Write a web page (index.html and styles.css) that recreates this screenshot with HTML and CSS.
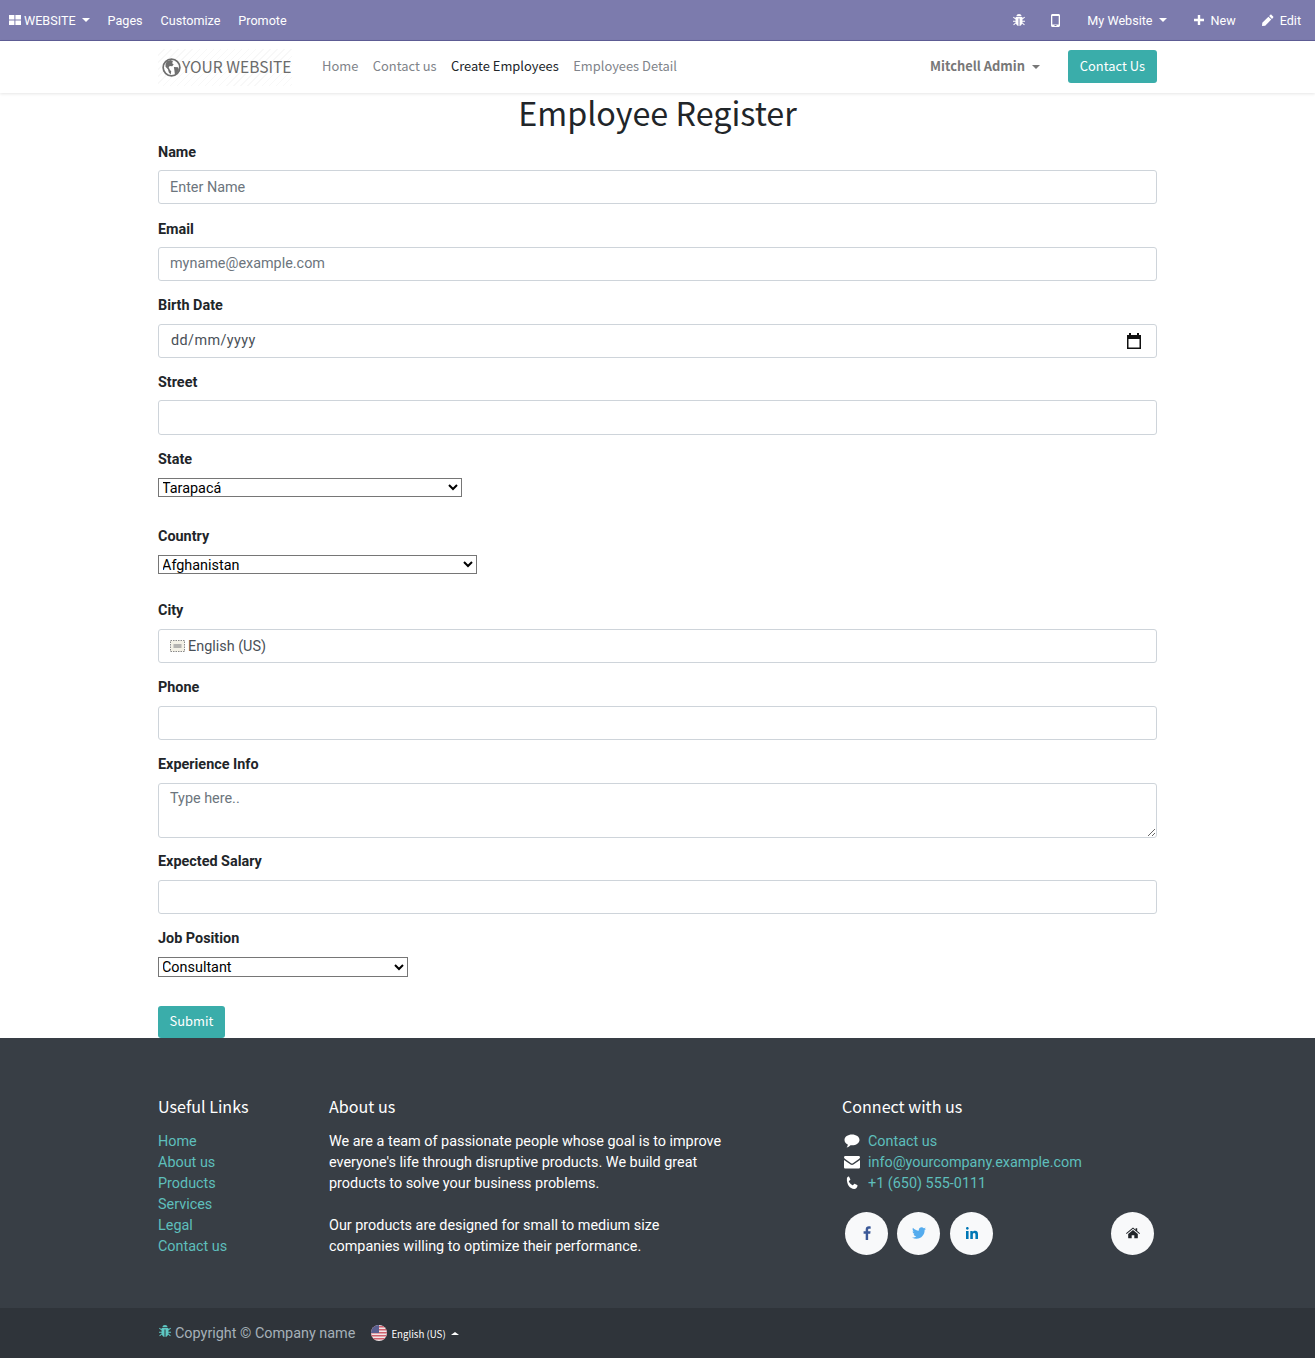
FILE: index.html
```html
<!DOCTYPE html>
<html lang="en">
<head>
  <meta charset="UTF-8">
  <title>Employee Register</title>
  <link rel="stylesheet" href="styles.css">
</head>
<body>

<div class="topbar">
  <div class="topbar-left">
    <a class="top-brand">
      <svg class="ico-apps" viewBox="0 0 12 10"><path d="M0 0h5.400v4.400H0zM6.400 0H12v4.400H6.400zM0 5.400h5.400V10H0zM6.400 5.400H12V10H6.400z"/></svg>
      WEBSITE <span class="caret"></span>
    </a>
    <a>Pages</a>
    <a>Customize</a>
    <a>Promote</a>
  </div>
  <div class="topbar-right">
    <a class="top-bug">
      <svg class="ico-bug" viewBox="0 0 14 14"><path d="M4.400 3.200C4.600 1.800 5.600 1 7 1s2.400.8 2.600 2.200zM3.600 4h6.800v1.200l2-1.400.6.800-2.600 1.900v1.200H13v1h-2.600v.8l2.400 2-.7.800-2-1.700C9.600 11.900 8.600 13 7.500 13V5.500h-1V13c-1.100 0-2.100-1.100-2.600-2.400l-2 1.700-.7-.8 2.400-2v-.8H1v-1h2.600V6.500L1 4.600l.6-.8 2 1.400z"/></svg>
    </a>
    <a class="top-phone">
      <svg class="ico-phone" viewBox="0 0 9 13"><path fill-rule="evenodd" d="M1.500 0h6C8.300 0 9 .7 9 1.500v10c0 .8-.7 1.500-1.500 1.500h-6C.7 13 0 12.300 0 11.500v-10C0 .7.7 0 1.500 0zM1.300 2v8.600h6.400V2zM3.500 11v1h2v-1z"/></svg>
    </a>
    <a class="top-site">My Website <span class="caret"></span></a>
    <a class="top-new">
      <svg class="ico-plus" viewBox="0 0 10 10"><path d="M3.800 0h2.400v3.800H10v2.400H6.200V10H3.800V6.200H0V3.800h3.800z"/></svg>
      New
    </a>
    <a class="top-edit">
      <svg class="ico-pencil" viewBox="0 0 12 12"><path d="M8.200.9c.4-.4 1-.4 1.400 0l1.500 1.500c.4.4.4 1 0 1.400L10 4.900 7.100 2zM6.400 2.700l2.900 2.900L3.200 11.700 0 12l.3-3.200z"/></svg>
      Edit
    </a>
  </div>
</div>

<header class="navbar">
  <div class="navbar-inner">
    <a class="logo">
      <svg class="logo-globe" viewBox="0 0 20 20">
        <circle cx="10" cy="10" r="8.800" fill="#fff" stroke="#6f6f6f" stroke-width="1.800"/>
        <path fill="#6f6f6f" d="M5 3.500l4-1.300 2.500 1 -.8 2.200 1.600 1.400-1.600 2-2.500-.5-1.200 1.500 1.500 3 1.200 1 -.5 3.500-2-2-1-3.500-2.500-2.500V6.500zM12.500 9.500l4.500.3.800 2.500-2 4-2.200 1.200-.5-4z"/>
      </svg>
      <span class="logo-text">YOUR WEBSITE</span>
    </a>
    <nav class="menu">
      <a>Home</a>
      <a>Contact us</a>
      <a class="active">Create Employees</a>
      <a>Employees Detail</a>
    </nav>
    <a class="user">Mitchell Admin <span class="caret"></span></a>
    <a class="btn btn-contact">Contact Us</a>
  </div>
</header>

<main class="page">
  <h1>Employee Register</h1>
  <form>
    <div class="field">
      <label>Name</label>
      <input class="control" type="text" placeholder="Enter Name">
    </div>
    <div class="field">
      <label>Email</label>
      <input class="control" type="text" placeholder="myname@example.com">
    </div>
    <div class="field">
      <label>Birth Date</label>
      <div class="date-wrap">
        <input class="control date-text" type="text" value="dd/mm/yyyy">
        <svg class="ico-calendar" viewBox="0 0 16 16"><path fill-rule="evenodd" d="M3 0h2v2h6V0h2v2h2v14H1V2h2zM2.500 6v8.500h11V6z"/></svg>
      </div>
    </div>
    <div class="field">
      <label>Street</label>
      <input class="control" type="text">
    </div>
    <div class="field field-select field-state">
      <label>State</label>
      <select class="select-state"><option>Tarapacá</option></select>
    </div>
    <div class="field field-select field-country">
      <label>Country</label>
      <select class="select-country"><option>Afghanistan</option></select>
    </div>
    <div class="field">
      <label>City</label>
      <div class="control city">
        <svg class="ico-broken" viewBox="0 0 15 14">
          <rect x=".5" y="1.500" width="14" height="11" fill="#f4f1e6" stroke="#8a8a8a" stroke-dasharray="1.500 1"/>
          <rect x="3.500" y="5" width="8" height="4" fill="#9a9a9a" opacity=".7"/>
        </svg>
        <span>English (US)</span>
      </div>
    </div>
    <div class="field">
      <label>Phone</label>
      <input class="control" type="text">
    </div>
    <div class="field field-area">
      <label>Experience Info</label>
      <textarea class="control area" placeholder="Type here.."></textarea>
    </div>
    <div class="field">
      <label>Expected Salary</label>
      <input class="control" type="text">
    </div>
    <div class="field field-select field-job">
      <label>Job Position</label>
      <select class="select-job"><option>Consultant</option></select>
    </div>
    <button class="btn btn-submit" type="button">Submit</button>
  </form>
</main>

<footer class="footer">
  <div class="footer-main">
    <div class="col-links">
      <h5>Useful Links</h5>
      <ul>
        <li><a>Home</a></li>
        <li><a>About us</a></li>
        <li><a>Products</a></li>
        <li><a>Services</a></li>
        <li><a>Legal</a></li>
        <li><a>Contact us</a></li>
      </ul>
    </div>
    <div class="col-about">
      <h5>About us</h5>
      <p>We are a team of passionate people whose goal is to improve everyone's life through disruptive products. We build great products to solve your business problems.</p>
      <p>Our products are designed for small to medium size companies willing to optimize their performance.</p>
    </div>
    <div class="col-connect">
      <h5>Connect with us</h5>
      <ul>
        <li>
          <svg class="ico-contact" viewBox="0 0 16 14"><path d="M8 .5c4.200 0 7.500 2.400 7.500 5.400S12.200 11.300 8 11.300c-.5 0-1 0-1.500-.1C5.500 12.300 4 13.200 2.500 13.500c.7-.8 1.200-1.700 1.300-3C1.900 9.500.5 7.800.5 5.900.5 2.900 3.800.5 8 .5z"/></svg>
          <a>Contact us</a>
        </li>
        <li>
          <svg class="ico-contact" viewBox="0 0 16 14"><path d="M1.300 1h13.400c.7 0 1.300.6 1.300 1.300 0 .6-.4 1.100-.8 1.400L8.900 8.300c-.5.400-1.300.4-1.800 0L.8 3.700C.4 3.400 0 2.900 0 2.300 0 1.600.6 1 1.300 1zM0 5l6.600 4.500c.8.600 2 .6 2.800 0L16 5v7.200c0 .7-.6 1.300-1.300 1.300H1.300C.6 13.500 0 12.900 0 12.200z"/></svg>
          <a>info@yourcompany.example.com</a>
        </li>
        <li>
          <svg class="ico-contact" viewBox="0 0 16 14"><path d="M4.600 .5c.3 0 .5.100.6.400l1.100 2.300c.1.300 0 .6-.2.800L5 4.900c-.2.200-.2.400-.1.600.8 1.600 2.100 2.900 3.600 3.700.2.100.4.100.6-.1l1.100-1.100c.2-.2.500-.3.800-.1l2.200 1.200c.2.100.4.400.3.700-.2 1.500-1.500 3.200-3.300 3.200C5.900 13 2.500 8.500 2.900 2.600 3 1.600 3.700.6 4.600.5z"/></svg>
          <a>+1 (650) 555-0111</a>
        </li>
      </ul>
      <div class="socials">
        <a class="social">
          <svg class="ico-fb" viewBox="0 0 9 16"><path d="M5.800 16V8.900h2.400l.4-2.800H5.800V4.400c0-.8.200-1.400 1.400-1.400h1.500V.5C8.400.4 7.600.3 6.600.3 4.500.3 3 1.600 3 4v2.100H.6v2.800H3V16z"/></svg>
        </a>
        <a class="social">
          <svg class="ico-tw" viewBox="0 0 16 13"><path d="M16 1.600c-.6.300-1.200.4-1.900.5.700-.4 1.200-1 1.400-1.800-.6.400-1.300.6-2.100.8C12.800.4 12 0 11 0 9.200 0 7.700 1.500 7.700 3.300c0 .3 0 .5.100.7C5.100 3.900 2.700 2.600 1.100.6.800 1.100.7 1.600.7 2.200c0 1.100.6 2.100 1.500 2.700-.5 0-1-.2-1.500-.4 0 1.600 1.100 2.900 2.600 3.200-.5.100-1 .2-1.500.1.400 1.300 1.600 2.200 3.100 2.300C3.700 11.100 1.900 11.700 0 11.500 1.500 12.500 3.200 13 5 13c6 0 9.400-5 9.400-9.400v-.4c.7-.4 1.200-1 1.600-1.600z"/></svg>
        </a>
        <a class="social social-in">
          <svg class="ico-in" viewBox="0 0 14 14"><path fill-rule="evenodd" d="M0 4.600h3V14H0zM1.500 0C2.500 0 3.200.7 3.200 1.600S2.500 3.200 1.500 3.200 0 2.500 0 1.600.6 0 1.500 0zM5 4.600h2.800v1.300c.5-.9 1.500-1.500 2.800-1.500C13.200 4.400 14 6 14 8.500V14h-3V9c0-1.200-.3-2.100-1.500-2.100S8 7.800 8 9v5H5z"/></svg>
        </a>
        <a class="social social-home">
          <svg class="ico-home" viewBox="0 0 16 13"><path d="M8 3l5.500 4.600V12c0 .4-.2.600-.6.600H9.500V9h-3v3.600H3.100c-.4 0-.6-.2-.6-.6V7.600zM8 .2l3 2.500V1h1.800v3.200L16 6.900l-.7.800L8 1.700.7 7.700 0 6.900z"/></svg>
        </a>
      </div>
    </div>
  </div>
  <div class="footer-bottom">
    <div class="bottom-inner">
      <svg class="ico-bug-teal" viewBox="0 0 14 14"><path d="M4.400 3.200C4.600 1.800 5.600 1 7 1s2.400.8 2.600 2.200zM3.600 4h6.800v1.200l2-1.400.6.800-2.600 1.900v1.200H13v1h-2.600v.8l2.400 2-.7.800-2-1.700C9.600 11.900 8.600 13 7.500 13V5.500h-1V13c-1.100 0-2.100-1.100-2.600-2.400l-2 1.700-.7-.8 2.400-2v-.8H1v-1h2.600V6.500L1 4.600l.6-.8 2 1.400z"/></svg>
      <span class="copy">Copyright © Company name</span>
      <svg class="flag" viewBox="0 0 16 16">
        <clipPath id="flag-clip"><circle cx="8" cy="8" r="8"/></clipPath>
        <g clip-path="url(#flag-clip)">
          <rect width="16" height="16" fill="#f2e6e8"/>
          <path fill="#d0606c" d="M0 1h16v1.500H0zM0 4h16v1.500H0zM0 7h16v1.500H0zM0 10h16v1.500H0zM0 13h16v1.500H0z"/>
          <rect width="8" height="8" fill="#5a5f8f"/>
        </g>
      </svg>
      <span class="lang">English (US)</span>
      <span class="caret caret-up"></span>
    </div>
  </div>
</footer>

</body>
</html>
```

FILE: styles.css
```css
* {
  box-sizing: border-box;
}
body {
  margin: 0;
  background: #fff;
  color: #212529;
  font-family: Roboto, sans-serif;
  font-size: 14.400px;
  line-height: 21px;
}
a {
  text-decoration: none;
}
svg {
  display: block;
  flex: none;
}

.caret {
  display: inline-block;
  width: 0;
  height: 0;
  margin-left: 4px;
  vertical-align: 2px;
  border-top: 4px solid currentColor;
  border-left: 4px solid transparent;
  border-right: 4px solid transparent;
}
.caret-up {
  margin-left: 0;
  margin-top: 1px;
  border-top: 0;
  border-bottom: 3px solid #fff;
  border-left: 4px solid transparent;
  border-right: 4px solid transparent;
}

/* top bar */
.topbar {
  display: flex;
  justify-content: space-between;
  height: 41px;
  background: #7c7bad;
  border-bottom: 1px solid #5f5e97;
  color: #fff;
  font-size: 12.600px;
}
.topbar a {
  display: flex;
  align-items: center;
  color: #fff;
}
.topbar-left,
.topbar-right {
  display: flex;
  height: 40px;
}
.topbar-left a {
  margin-left: 18px;
}
.topbar-left .top-brand {
  margin-left: 9px;
  gap: 3px;
}
.top-brand .caret {
  margin-left: 3px;
}
.ico-apps {
  width: 12px;
  height: 10px;
  fill: #fff;
}
.ico-bug {
  width: 14px;
  height: 14px;
  fill: #fff;
}
.ico-phone {
  width: 9px;
  height: 13px;
  fill: #fff;
}
.top-bug {
  margin-right: 25px;
}
.top-phone {
  margin-right: 27px;
}
.top-site {
  margin-right: 27px;
}
.top-site .caret {
  margin-left: 6px;
}
.top-new {
  gap: 7px;
  margin-right: 26px;
}
.ico-plus {
  width: 10px;
  height: 10px;
  fill: #fff;
}
.top-edit {
  gap: 6px;
  margin-right: 14px;
}
.ico-pencil {
  width: 12px;
  height: 12px;
  fill: #fff;
}

/* site nav */
.navbar {
  height: 52px;
  background: #fff;
  box-shadow: 0 1px 3px rgba(0, 0, 0, .1);
}
.navbar-inner {
  display: flex;
  align-items: center;
  width: 999px;
  height: 100%;
  margin-left: 158px;
  font-family: "Noto Sans CJK SC", "Noto Sans", sans-serif;
  font-size: 12.900px;
}
.logo {
  display: flex;
  align-items: center;
  width: 134px;
  height: 37px;
  margin-top: 1px;
  padding-left: 4px;
  color: #6b6b6b;
  font-size: 15.600px;
  white-space: nowrap;
  background: repeating-linear-gradient(135deg, #fff 0, #fff 4px, #f8f8f8 4px, #f8f8f8 5px);
}
.logo-text {
  margin-top: -2px;
}
.logo-globe {
  width: 19px;
  height: 19px;
  margin-right: 1px;
}
.menu {
  display: flex;
  gap: 14.500px;
  margin-left: 30px;
  margin-top: -3px;
}
.menu a {
  color: #80848a;
}
.menu a.active {
  color: #212529;
}
.user {
  margin-left: auto;
  margin-right: 28px;
  margin-top: -3px;
  color: #777;
  font-weight: 700;
}
.user .caret {
  margin-left: 4px;
}
.btn {
  display: block;
  border: 0;
  background: #3aadaa;
  color: #fff;
  border-radius: 3px;
  font-family: "Noto Sans CJK SC", "Noto Sans", sans-serif;
  font-size: 12.900px;
}
.btn-contact {
  height: 33px;
  margin-top: -2px;
  padding: 5px 12px;
}

/* form */
.page {
  width: 999px;
  margin-left: 158px;
}
h1 {
  margin: 0;
  height: 48px;
  text-align: center;
  font-family: "Noto Sans CJK SC", "Noto Sans", sans-serif;
  font-size: 32.300px;
  font-weight: 400;
  line-height: 38px;
}
.field {
  margin-bottom: 13.400px;
}
.field label {
  display: block;
  margin-bottom: 8px;
  font-weight: 700;
  line-height: 21px;
}
.field:nth-child(-n+4) label {
  padding-top: .8px;
  margin-bottom: 7.200px;
}
.field-state label {
  padding-top: .8px;
}
.field-area {
  margin-bottom: 12.400px;
}
.field-area label {
  padding-top: 1px;
}
.control {
  display: block;
  width: 100%;
  height: 34.400px;
  padding: 6px 11px;
  background: #fff;
  border: 1px solid #ced4da;
  border-radius: 3px;
  color: #495057;
  font-family: Roboto, sans-serif;
  font-size: 14.400px;
  line-height: 21px;
  outline: none;
}
.control::placeholder {
  color: #6c757d;
  opacity: 1;
}
.date-wrap {
  position: relative;
}
.date-text {
  padding-left: 12px;
  letter-spacing: .42px;
}
.ico-calendar {
  position: absolute;
  right: 15px;
  top: 9px;
  width: 16px;
  height: 16px;
  fill: #111;
}
.field-select select {
  display: block;
  height: 19px;
  padding: 0;
  text-indent: -1px;
  background: #fff;
  color: #000;
  border: 1px solid #767676;
  border-radius: 0;
  font-family: Roboto, sans-serif;
  font-size: 14.400px;
}
.field-select {
  margin-bottom: 29px;
}
.field-country {
  margin-bottom: 26px;
}
.field-job {
  margin-bottom: 29.200px;
}
.select-state {
  width: 304px;
}
.select-country {
  width: 319px;
}
.field-job .select-job {
  width: 250px;
  height: 20px;
}
.city {
  display: flex;
  align-items: center;
  gap: 3px;
}
.ico-broken {
  width: 15px;
  height: 14px;
}
.area {
  height: 55px;
  padding-top: 4px;
  resize: vertical;
}
.btn-submit {
  height: 32px;
  padding: 0 11.500px 3px;
}

/* footer */
.footer {
  background: #383e45;
  color: #fff;
}
.footer-main {
  display: flex;
  height: 270px;
  padding: 56px 0 0 158px;
}
h5 {
  margin: 0 0 13px;
  font-family: "Noto Sans CJK SC", "Noto Sans", sans-serif;
  font-size: 16.100px;
  font-weight: 400;
  line-height: 24px;
}
.footer ul {
  margin: 0;
  padding: 0;
  list-style: none;
}
.footer li {
  height: 21px;
}
.footer li a {
  color: #5ebfbc;
}
.col-links {
  width: 171px;
}
.col-about {
  width: 513px;
}
.col-about p {
  width: 400px;
  margin: 0 0 21px;
}
.col-connect {
  width: 315px;
}
.col-connect li {
  display: flex;
  align-items: center;
  gap: 8px;
  padding-left: 2px;
}
.ico-contact {
  width: 16px;
  height: 14px;
  fill: #fff;
}
.socials {
  display: flex;
  gap: 9px;
  margin-top: 18px;
  padding-left: 3px;
}
.social {
  display: flex;
  align-items: center;
  justify-content: center;
  width: 43px;
  height: 43px;
  background: #f8f9fa;
  border-radius: 50%;
}
.social-in {
  margin-left: 1px;
}
.social-home {
  margin-left: auto;
  margin-right: 3px;
}
.ico-fb {
  width: 8px;
  height: 14px;
  fill: #3b5998;
}
.ico-tw {
  width: 14px;
  height: 12px;
  fill: #55acee;
}
.ico-in {
  width: 12px;
  height: 12px;
  fill: #0077b5;
}
.ico-home {
  width: 14px;
  height: 12px;
  fill: #212529;
}
.footer-bottom {
  height: 50px;
  background: #2f343a;
}
.bottom-inner {
  display: flex;
  align-items: center;
  height: 100%;
  padding-left: 158px;
}
.ico-bug-teal {
  width: 14px;
  height: 14px;
  fill: #5ec8c4;
  margin-right: 3px;
  margin-top: -3px;
}
.copy {
  color: #a5b0b8;
  margin-right: 16px;
  margin-top: 2px;
}
.flag {
  width: 16px;
  height: 16px;
  margin-right: 4px;
}
.lang {
  margin-right: 5px;
  margin-top: 3px;
  font-family: "Noto Sans CJK SC", "Noto Sans", sans-serif;
  font-size: 9.700px;
}
```
